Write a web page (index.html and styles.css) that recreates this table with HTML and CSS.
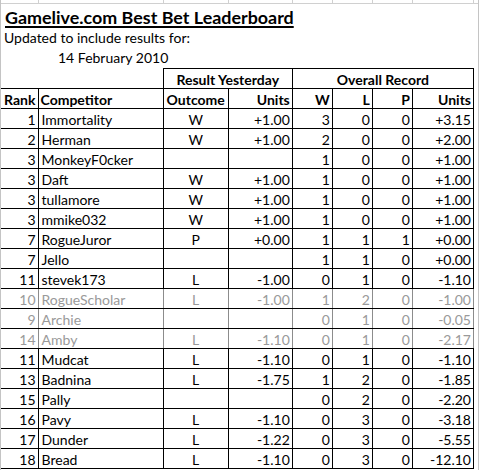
FILE: index.html
```html
<!DOCTYPE html>
<html>
<head>
<meta charset="utf-8">
<link rel="stylesheet" href="styles.css">
</head>
<body>
<div class="sheet">
  <div class="strip">
    <span class="g g-rank"></span><span class="g g-comp"></span><span class="g g-out"></span><span class="g g-units"></span><span class="g g-n"></span><span class="g g-n"></span><span class="g g-n"></span><span class="g g-tot"></span>
  </div>
  <div class="title-row"><span class="title">Gamelive.com Best Bet Leaderboard</span></div>
  <div class="sub-row">Updated to include results for:</div>
  <div class="date-row">14 February 2010</div>
  <table class="board">
    <colgroup>
      <col class="c-rank"><col class="c-comp"><col class="c-out"><col class="c-units"><col class="c-n"><col class="c-n"><col class="c-n"><col class="c-tot">
    </colgroup>
    <thead>
      <tr class="group">
        <th colspan="2" class="blank"></th>
        <th colspan="2">Result Yesterday</th>
        <th colspan="4">Overall Record</th>
      </tr>
      <tr class="head">
        <th class="l">Rank</th><th class="l">Competitor</th><th class="c">Outcome</th><th class="r">Units</th><th class="r">W</th><th class="r">L</th><th class="r">P</th><th class="r">Units</th>
      </tr>
    </thead>
    <tbody>
      <tr><td>1</td><td>Immortality</td><td>W</td><td>+1.00</td><td>3</td><td>0</td><td>0</td><td>+3.15</td></tr>
      <tr><td>2</td><td>Herman</td><td>W</td><td>+1.00</td><td>2</td><td>0</td><td>0</td><td>+2.00</td></tr>
      <tr><td>3</td><td>MonkeyF0cker</td><td></td><td></td><td>1</td><td>0</td><td>0</td><td>+1.00</td></tr>
      <tr><td>3</td><td>Daft</td><td>W</td><td>+1.00</td><td>1</td><td>0</td><td>0</td><td>+1.00</td></tr>
      <tr><td>3</td><td>tullamore</td><td>W</td><td>+1.00</td><td>1</td><td>0</td><td>0</td><td>+1.00</td></tr>
      <tr><td>3</td><td>mmike032</td><td>W</td><td>+1.00</td><td>1</td><td>0</td><td>0</td><td>+1.00</td></tr>
      <tr><td>7</td><td>RogueJuror</td><td>P</td><td>+0.00</td><td>1</td><td>1</td><td>1</td><td>+0.00</td></tr>
      <tr><td>7</td><td>Jello</td><td></td><td></td><td>1</td><td>1</td><td>0</td><td>+0.00</td></tr>
      <tr><td>11</td><td>stevek173</td><td>L</td><td>-1.00</td><td>0</td><td>1</td><td>0</td><td>-1.10</td></tr>
      <tr class="faded"><td>10</td><td>RogueScholar</td><td>L</td><td>-1.00</td><td>1</td><td>2</td><td>0</td><td>-1.00</td></tr>
      <tr class="faded"><td>9</td><td>Archie</td><td></td><td></td><td>0</td><td>1</td><td>0</td><td>-0.05</td></tr>
      <tr class="faded"><td>14</td><td>Amby</td><td>L</td><td>-1.10</td><td>0</td><td>1</td><td>0</td><td>-2.17</td></tr>
      <tr><td>11</td><td>Mudcat</td><td>L</td><td>-1.10</td><td>0</td><td>1</td><td>0</td><td>-1.10</td></tr>
      <tr><td>13</td><td>Badnina</td><td>L</td><td>-1.75</td><td>1</td><td>2</td><td>0</td><td>-1.85</td></tr>
      <tr><td>15</td><td>Pally</td><td></td><td></td><td>0</td><td>2</td><td>0</td><td>-2.20</td></tr>
      <tr><td>16</td><td>Pavy</td><td>L</td><td>-1.10</td><td>0</td><td>3</td><td>0</td><td>-3.18</td></tr>
      <tr><td>17</td><td>Dunder</td><td>L</td><td>-1.22</td><td>0</td><td>3</td><td>0</td><td>-5.55</td></tr>
      <tr><td>18</td><td>Bread</td><td>L</td><td>-1.10</td><td>0</td><td>3</td><td>0</td><td>-12.10</td></tr>
    </tbody>
  </table>
</div>
</body>
</html>
```
FILE: styles.css
```css
html, body {
  margin: 0;
  padding: 0;
  background: #ffffff;
}
body {
  width: 479px;
  height: 470px;
  overflow: hidden;
  font-family: Lato, "Open Sans", sans-serif;
  color: #000;
}
.sheet {
  width: 477px;
  height: 470px;
  border-left: 1px solid #c4c4c4;
  border-right: 1px solid #c4c4c4;
  box-sizing: content-box;
}
.strip {
  display: flex;
  height: 3px;
  border-bottom: 1px solid #d0d0d0;
}
.g {
  display: block;
  height: 3px;
  border-right: 1px solid #d0d0d0;
  box-sizing: border-box;
}
.g-rank { width: 38px; }
.g-comp { width: 125px; }
.g-out { width: 65px; }
.g-units { width: 64px; }
.g-n { width: 40px; }
.g-tot { width: 61px; }

.title-row {
  height: 24px;
  padding-left: 4px;
  display: flex;
  align-items: flex-end;
}
.title {
  font-size: 17.9px;
  font-weight: 700;
  text-decoration: underline;
  text-decoration-thickness: 2px;
  text-underline-offset: 2px;
  line-height: 22px;
}
.sub-row {
  height: 20px;
  line-height: 20px;
  font-size: 14px;
  padding-left: 3px;
}
.date-row {
  height: 20px;
  line-height: 20px;
  font-size: 14px;
  padding-left: 57px;
}
.board {
  border-collapse: collapse;
  table-layout: fixed;
  width: 473px;
  font-size: 14px;
}
.c-rank { width: 37px; }
.c-comp { width: 125px; }
.c-out { width: 65px; }
.c-units { width: 64px; }
.c-n { width: 40px; }
.c-tot { width: 61px; }

.board th, .board td {
  border: 1px solid #000;
  height: 19px;
  line-height: 17px;
  padding: 2px 2px 0;
  white-space: nowrap;
  overflow: hidden;
  box-sizing: border-box;
}
.board th {
  font-weight: 700;
}
.board tr > :first-child {
  border-left: none;
}
.group th {
  text-align: center;
}
.group .blank {
  border: none;
}
.head .l { text-align: left; }
.head .c { text-align: center; }
.head .r { text-align: right; }
.head th:first-child { padding-left: 3px; }

.board td { text-align: right; }
.board td:nth-child(2) { text-align: left; padding-left: 3px; }
.board td:nth-child(3) { text-align: center; }

.faded td {
  color: #9a9a9a;
  border-left-color: #8c8c8c;
  border-right-color: #8c8c8c;
}
```
